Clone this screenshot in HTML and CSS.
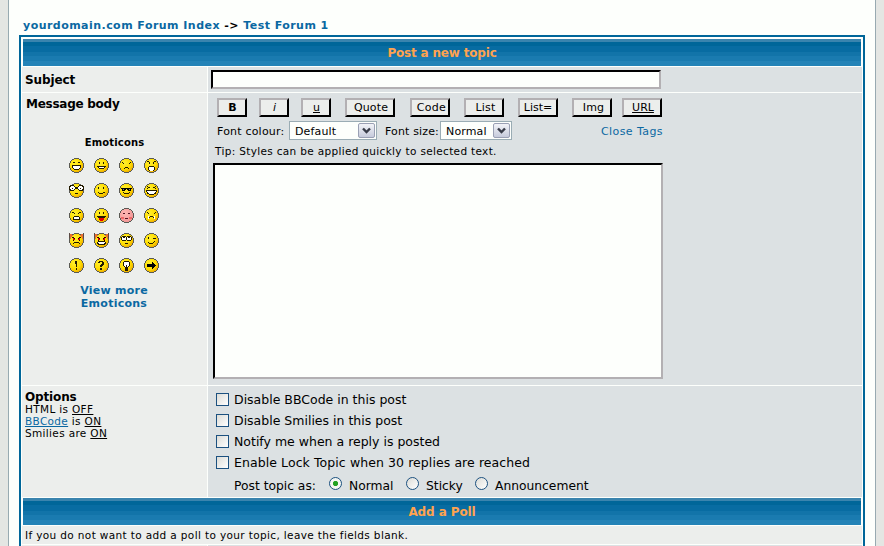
FILE: index.html
```html
<!DOCTYPE html>
<html lang="en">
<head>
<meta charset="utf-8">
<title>Post a new topic</title>
<link rel="stylesheet" href="styles.css">
</head>
<body>
<svg class="defs" width="0" height="0">
  <defs>
    <radialGradient id="gold" cx="38%" cy="35%" r="68%"><stop offset="0" stop-color="#fff030"/><stop offset=".6" stop-color="#ffdc00"/><stop offset="1" stop-color="#e8a000"/></radialGradient>
    <radialGradient id="pink" cx="40%" cy="35%" r="65%"><stop offset="0" stop-color="#ffb8b4"/><stop offset="1" stop-color="#f09494"/></radialGradient>
    <linearGradient id="knob" x2="0" y2="1"><stop offset="0" stop-color="#f4f5f9"/><stop offset="1" stop-color="#c4c9da"/></linearGradient>
    <g id="drop"><rect x=".5" y=".5" width="16" height="14" rx="1.500" fill="url(#knob)" stroke="#9aa0b4"/><path d="M5 5.500l3.500 3.500l3.500-3.500" fill="none" stroke="#383c48" stroke-width="2.400"/></g>
    <path id="disc" d="M5 0h5v1h2v1h1v1h1v2h1v5h-1v2h-1v1h-1v1h-2v1h-5v-1h-2v-1h-1v-1h-1v-2h-1v-5h1v-2h1v-1h1v-1h2z"/>
    <path id="rim" d="M5 .5h5M3 1.5h2M10 1.5h2M2 2.5h1M12 2.5h1M1 3.5h1M13 3.5h1M1 4.5h1M13 4.5h1M.5 5v5M14.5 5v5M1 10.5h1M13 10.5h1M1 11.5h1M13 11.5h1M2 12.5h1M12 12.5h1M3 13.5h2M10 13.5h2M5 14.5h5" stroke="#5a5a54"/>
    <g id="face"><use href="#disc" fill="url(#gold)"/><use href="#rim"/></g>
    <g id="blush"><use href="#disc" fill="url(#pink)"/><use href="#rim"/></g>
    <g id="horns"><use href="#face"/><path d="M0 0h1v1h2v1h1v1h-1v1h-1v2h-1v-1h-1zM15 0h-1v1h-2v1h-1v1h1v1h1v2h1v-1h1z" fill="#e87030"/><path d="M0 0h1v5h-1zM14 0h1v5h-1z" fill="#5a4a44"/><path d="M3 4.5h2M5 5.5h1M9 5.5h1M10 4.5h2M4 7.5h1M10 7.5h1" stroke="#200"/><path d="M4 5h1v1h1v1h-2zM11 5h-1v1h-1v1h2z" fill="#e00000"/></g>
  </defs>
</svg>
<main class="page">
  <nav class="crumbs"><a href="#">yourdomain.com Forum Index</a> -&gt; <a href="#">Test Forum 1</a></nav>
  <form class="forum">
    <div class="band"><span class="t-band1">Post a new topic</span></div>
    <div class="row subject">
      <div class="label"><b class="t-subject">Subject</b></div>
      <div class="field"><input class="sunken" type="text" aria-label="Subject"></div>
    </div>
    <div class="row message">
      <div class="label">
        <b class="t-message">Message body</b>
        <div class="smilies">
          <b class="smilies-title">Emoticons</b>
          <div class="grid">
            <svg viewBox="0 0 15 15"><use href="#face"/><path d="M3 7h9v3h-1v1h-1v1h-5v-1h-1v-1h-1z" fill="#221a00"/><path d="M4 8h7v2h-1v1h-5v-1h-1z" fill="#fff"/><path d="M4 4.500h2M9 4.500h2" stroke="#221a00"/></svg>
            <svg viewBox="0 0 15 15"><use href="#face"/><path d="M5.500 4v2M9.500 4v2M3 8.500h9M4 9.500h1M10 9.500h1M5 10.500h5" stroke="#221a00"/><path d="M5 9.500h5" stroke="#fff"/></svg>
            <svg viewBox="0 0 15 15"><use href="#face"/><path d="M4.500 5v1M10.500 5v1M3 4.500h1M11 4.500h1M6 9.500h3M5 10.500h1M9 10.500h1" stroke="#221a00"/></svg>
            <svg viewBox="0 0 15 15"><use href="#face"/><path d="M5.500 4v2M9.500 4v2M3 3.500h2M10 3.500h2" stroke="#221a00"/><path d="M5 8h5v1h1v3h-1v1h-5v-1h-1v-3h1z" fill="#221a00"/><path d="M5 9h5v3h-1v1h-3v-1h-1z" fill="#fff"/></svg>
            <svg viewBox="0 0 15 15"><use href="#face"/><path d="M1 2h4v1h1v1h3v-1h1v-1h4v1h1v4h-1v1h-4v-1h-1v-1h-3v1h-1v1h-4v-1h-1v-4h1z" fill="#221a00"/><path d="M2 3h3v1h1v2h-1v1h-3v-1h-1v-2h1zM10 3h3v1h1v2h-1v1h-3v-1h-1v-2h1z" fill="#fff"/><path d="M3 5.500h1M11 5.500h1M6 10.500h3" stroke="#221a00"/></svg>
            <svg viewBox="0 0 15 15"><use href="#face"/><path d="M4.500 4v2M9.500 4v2M4 9.500h1M5 10.500h4M9 9.500h2" stroke="#221a00"/></svg>
            <svg viewBox="0 0 15 15"><use href="#face"/><path d="M2 5h11v1h-1v2h-3v-1h-1v-1h-1v1h-1v1h-3v-2h-1z" fill="#000"/><path d="M4 6.500h1M10 6.500h1" stroke="#888"/><path d="M4 9.500h1M5 10.500h5M10 9.500h1" stroke="#221a00"/></svg>
            <svg viewBox="0 0 15 15"><use href="#face"/><path d="M3 3.500h1M4 4.500h2M3 5.500h1M11 3.500h1M9 4.500h2M11 5.500h1" stroke="#221a00"/><path d="M2 7h11v2h-1v2h-2v1h-5v-1h-2v-2h-1z" fill="#221a00"/><path d="M3 8h9v1h-1v1h-1v1h-5v-1h-1v-1h-1z" fill="#fff"/></svg>
            <svg viewBox="0 0 15 15"><use href="#face"/><path d="M3 4.500h2M5 5.500h1M9 5.500h1M10 4.500h2" stroke="#221a00"/><path d="M5 8h5v1h1v3h-7v-3h1z" fill="#221a00"/><path d="M5 9.500h5M5 10.500h5" stroke="#fff"/></svg>
            <svg viewBox="0 0 15 15"><use href="#face"/><path d="M5.500 4v2M9.500 4v2M3 8.500h9M4 9.500h7" stroke="#221a00"/><path d="M5 10h5v2h-1v1h-3v-1h-1z" fill="#e80000"/></svg>
            <svg viewBox="0 0 15 15"><use href="#blush"/><path d="M4 5.500h2M9 5.500h2M6 10.500h3" stroke="#512"/><path d="M2 9h3v2h-3zM10 9h3v2h-3z" fill="#f06868"/></svg>
            <svg viewBox="0 0 15 15"><use href="#face"/><path d="M4.500 5v1M10.500 5v1M3 4.500h1M11 4.500h1M6 8.500h3M5 9.500h1M9 9.500h1" stroke="#221a00"/><path d="M4.500 8v3M10.500 8v3" stroke="#fff"/></svg>
            <svg viewBox="0 0 15 15"><use href="#horns"/><path d="M5 9.500h5M4 10.500h1M10 10.500h1" stroke="#221a00"/></svg>
            <svg viewBox="0 0 15 15"><use href="#horns"/><path d="M4 8h7v1h1v2h-1v1h-7v-1h-1v-2h1z" fill="#221a00"/><path d="M4 9.500h7M5 10.500h5" stroke="#fff"/></svg>
            <svg viewBox="0 0 15 15"><use href="#face"/><path d="M3 3h4v1h1v-1h4v1h1v3h-1v1h-4v-1h-1v1h-4v-1h-1v-3h1z" fill="#221a00"/><path d="M3 4h4v3h-4zM8 4h4v3h-4z" fill="#fff"/><path d="M4 4.500h2M9 4.500h2M6 10.500h3" stroke="#221a00"/></svg>
            <svg viewBox="0 0 15 15"><use href="#face"/><path d="M4.500 4v2M9 5.500h3M4 9.500h1M5 10.500h4M9 9.500h1M10 8.500h1" stroke="#221a00"/></svg>
            <svg viewBox="0 0 15 15"><use href="#face"/><path d="M7 3h1v6h-1zM6 3h1v3h-1zM7 10h1v2h-1z" fill="#221a00"/></svg>
            <svg viewBox="0 0 15 15"><use href="#face"/><path d="M5 3h4v1h1v3h-1v1h-1v1h-2v-2h1v-1h1v-2h-2v1h-2v-1h1zM6 10h2v2h-2z" fill="#221a00"/></svg>
            <svg viewBox="0 0 15 15"><use href="#face"/><path d="M5 3h5v1h1v4h-1v1h-1v4h-3v-4h-1v-1h-1v-4h1z" fill="#221a00"/><path d="M5 4h5v4h-1v1h-1v-2h-1v2h-1v-1h-1z" fill="#fff"/></svg>
            <svg viewBox="0 0 15 15"><use href="#face"/><path d="M3 6h5v-2h1v1h1v1h1v1h1v1h-1v1h-1v1h-1v1h-1v-2h-5z" fill="#000"/></svg>
          </div>
          <a class="more" href="#">View more<br>Emoticons</a>
        </div>
      </div>
      <div class="field editor">
        <div class="tools">
          <button type="button" class="w30"><b>B</b></button>
          <button type="button" class="w30"><i>i</i></button>
          <button type="button" class="w30"><u>u</u></button>
          <button type="button" class="w50">Quote</button>
          <button type="button" class="code">Code</button>
          <button type="button" class="list">List</button>
          <button type="button">List=</button>
          <button type="button" class="list">Img</button>
          <button type="button" class="url"><u>URL</u></button>
        </div>
        <div class="fonts">
          <span class="t-colour">Font colour:</span>
          <span class="select colour"><span>Default</span><svg viewBox="0 0 17 15"><use href="#drop"/></svg></span>
          <span class="t-size">Font size:</span>
          <span class="select size"><span>Normal</span><svg viewBox="0 0 17 15"><use href="#drop"/></svg></span>
          <a class="close" href="#">Close Tags</a>
        </div>
        <p class="tip"><span>Tip: Styles can be applied quickly to selected text.</span></p>
        <textarea class="sunken" aria-label="Message body"></textarea>
      </div>
    </div>
    <div class="row options">
      <div class="label">
        <b class="t-options">Options</b>
        <p><span>HTML is <u>OFF</u></span></p>
        <p><span><a href="#"><u>BBCode</u></a> is <u>ON</u></span></p>
        <p><span>Smilies are <u>ON</u></span></p>
      </div>
      <div class="field checks">
        <label><input type="checkbox"><span>Disable BBCode in this post</span></label>
        <label><input type="checkbox"><span>Disable Smilies in this post</span></label>
        <label><input type="checkbox"><span>Notify me when a reply is posted</span></label>
        <label><input type="checkbox"><span class="lock">Enable Lock Topic when 30 replies are reached</span></label>
        <div class="kinds">
          <span class="t-kind">Post topic as:</span>
          <label class="normal"><input type="radio" name="kind" checked><span>Normal</span></label>
          <label class="sticky"><input type="radio" name="kind"><span>Sticky</span></label>
          <label><input type="radio" name="kind"><span>Announcement</span></label>
        </div>
      </div>
    </div>
    <div class="band"><span class="t-band2">Add a Poll</span></div>
    <div class="note"><span>If you do not want to add a poll to your topic, leave the fields blank.</span></div>
    <div class="row next"><div class="label"></div><div class="field"></div></div>
  </form>
</main>
</body>
</html>
```
FILE: styles.css
```css
* { box-sizing: border-box; }
html, body { height: 100%; }
body { margin: 0; background: #e4e6e3; color: #000; font: 11px/13px "DejaVu Sans", sans-serif; overflow: hidden; white-space: nowrap; }
a { color: #0a68a2; text-decoration: none; }
p { margin: 0; }
.defs { position: absolute; }
.page { height: 546px; margin: 0 8px; border: solid #98aab1; border-width: 0 1px; background: #fdfffc; padding: 17px 10px 0; overflow: hidden; }
.crumbs { height: 18px; padding-left: 4px; font-weight: bold; line-height: 18px; letter-spacing: .46px; }
.forum { display: flex; flex-direction: column; gap: 1px; width: 846px; height: 540px; border: 2px solid #006699; padding: 1px; background: #fdfffc; }
.band { flex: none; height: 28px; border: 1px solid #fdfffc; border-bottom: 0; color: #ffa34f; font-weight: bold; font-size: 12px; line-height: 28px; letter-spacing: -.18px; text-align: center;
  background: linear-gradient(#3a84ae 0 3px, #006699 3px 7px, #086ca2 7px 13px, #1274a9 13px 17px, #1a7bb0 17px 22px, #2483b7 22px); }
.t-band2 { letter-spacing: -.1px; }
.row { flex: none; display: grid; grid-template-columns: 185px 654px; gap: 1px; }
.label { background: #eceeec; padding-left: 3px; font-size: 10px; line-height: 12px; }
.label > b { display: block; font-size: 12px; line-height: 16px; letter-spacing: -.26px; }
.field { background: #dce1e3; }
.subject { height: 25px; }
.subject .label { padding-top: 5px; }
.subject .label > b { letter-spacing: -.1px; }
.subject .field { padding: 3px; }
.sunken { display: block; width: 450px; margin: 0; border: 2px solid; border-color: #000 #b3b0b3 #b3b0b3 #000; border-radius: 0; background: #fdfffc; outline: 0; resize: none; }
input.sunken { height: 19px; }
.message { height: 292px; }
.message .label { padding-top: 3px; padding-left: 4px; }
.smilies { width: 176px; margin-top: 24px; text-align: center; }
.smilies-title { display: block; font-size: 10px; line-height: 13px; letter-spacing: .15px; padding-left: 1px; }
.grid { display: grid; grid-template-columns: repeat(4, 15px); gap: 10px; margin: 9px 0 0 43px; }
.grid svg { width: 15px; height: 15px; display: block; shape-rendering: crispEdges; }
.more { display: block; margin-top: 11px; font-size: 11px; line-height: 13px; font-weight: bold; letter-spacing: .25px; }
.editor { padding: 5px 0 0 5px; }
.tools { display: flex; gap: 14px; padding-left: 4px; height: 19px; }
button { width: 40px; height: 19px; margin: 0; padding: 0; border: 2px solid; border-color: #b3b0b3 #000 #000 #b3b0b3; background: #eceeec; color: #000; font: 11px/15px "DejaVu Sans", sans-serif; }
.tools .w30 { width: 30px; margin-right: -2px; padding-left: 1px; }
.tools .w50 { width: 50px; margin: 0 1px 0 2px; padding-left: 2px; letter-spacing: .15px; }
.tools .code { padding-left: 3px; letter-spacing: .3px; }
.tools .list { padding-left: 3px; letter-spacing: .2px; }
.tools .url { margin-left: -4px; padding-left: 2px; }
.fonts { display: flex; height: 19px; margin-top: 4px; padding-left: 4px; line-height: 21px; }
.fonts > * { flex: none; }
.t-colour { width: 72px; letter-spacing: .2px; }
.select { display: flex; justify-content: space-between; height: 19px; border: 1px solid #9aacb4; padding: 1px 1px 1px 5px; background: #fdfffc; line-height: 17px; letter-spacing: .15px; }
.select svg { width: 17px; height: 15px; }
.colour { width: 88px; }
.t-size { width: 55px; margin-left: 8px; letter-spacing: .15px; }
.size { width: 72px; }
.close { width: 151px; text-align: right; letter-spacing: .42px; }
.tip { height: 23px; padding: 5px 0 0 2px; font-size: 10.5px; line-height: 13px; letter-spacing: .33px; }
textarea.sunken { height: 216px; }
.options { height: 110px; }
.options .label { padding-top: 4px; font-size: 10.5px; }
.options .label > b { line-height: 15px; margin-bottom: -2px; letter-spacing: -.15px; }
.options p { letter-spacing: .34px; }
.checks { padding: 3px 0 0 8px; font-size: 12.5px; }
.checks > label { display: flex; align-items: center; height: 21px; }
.lock { letter-spacing: .08px; }
input[type=checkbox], input[type=radio] { appearance: none; width: 13px; height: 13px; margin: 0 5px 0 0; border: 1px solid #1c5180; background: linear-gradient(135deg, #dcdcd7, #fff); }
input[type=radio] { border-radius: 50%; margin: 0 7px 3px 0; }
input[type=radio]:checked { background: radial-gradient(circle, #21a121 0 2.200px, #f4f6f2 3px); }
.kinds { display: flex; align-items: center; height: 24px; padding-left: 18px; font-size: 12.3px; }
.kinds span { padding-top: 3px; }
.kinds label { display: flex; align-items: center; height: 16px; }
.t-kind { width: 95px; }
.normal { width: 77px; }
.sticky { width: 69px; }
.note { flex: none; height: 18px; padding-left: 3px; background: #eceeec; font-size: 10.5px; line-height: 18px; letter-spacing: .365px; }
.next { height: 30px; }
```
